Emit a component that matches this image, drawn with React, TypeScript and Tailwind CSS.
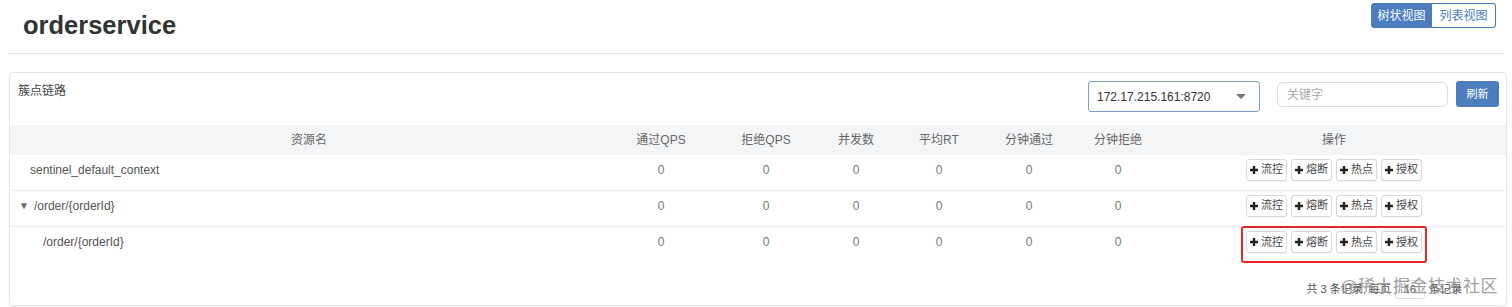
import React from "react";

const font = { fontFamily: '"Liberation Sans", Arial, "Noto Sans CJK SC", sans-serif' };

const cols = "grid grid-cols-[598px_106px_104px_76px_90px_90px_88px_1fr]";

const headers = ["通过QPS", "拒绝QPS", "并发数", "平均RT", "分钟通过", "分钟拒绝"];

function Plus() {
  return (
    <svg width="8" height="8" viewBox="0 0 8 8" className="mr-[3px]">
      <path d="M2.8 0h2.4v2.8H8v2.4H5.2V8H2.8V5.2H0V2.8h2.8z" fill="#222" />
    </svg>
  );
}

function Actions({ marked }: { marked?: boolean }) {
  const items = ["流控", "熔断", "热点", "授权"];
  return (
    <div className="relative flex justify-center gap-[4px]">
      {items.map((t) => (
        <button
          key={t}
          className="flex h-[22px] w-[41px] items-center justify-center rounded-[3px] border border-[#d9d9d9] bg-white text-[11px] text-[#444] shadow-[0_1px_1px_rgba(0,0,0,0.04)]"
        >
          <Plus />
          {t}
        </button>
      ))}
      {marked && (
        <div className="pointer-events-none absolute left-1/2 top-[-5px] h-[37px] w-[186px] -translate-x-1/2 rounded-[3px] border-2 border-[#e8262a]" />
      )}
    </div>
  );
}

function Row({ name, indent, caret, marked, last }: { name: string; indent: string; caret?: boolean; marked?: boolean; last?: boolean }) {
  return (
    <div className={`${cols} h-[36px] items-center pb-[6px] text-[12px] text-[#555] ${last ? "" : "border-b border-[#ececec]"}`}>
      <div className={`flex items-center ${indent}`}>
        {caret && <span className="mr-[5px] text-[10px] text-[#666]">▼</span>}
        {name}
      </div>
      {headers.map((h) => (
        <div key={h} className="text-center text-[#777]">0</div>
      ))}
      <Actions marked={marked} />
    </div>
  );
}

export default function App() {
  return (
    <div className="h-[307px] w-[1512px] overflow-hidden bg-white" style={font}>
      <div className="mx-[8px] flex h-[54px] items-start justify-between border-b border-[#e3e3e3]">
        <h1 className="pl-[15px] pt-[6px] text-[25.5px] font-bold text-[#333]">orderservice</h1>
        <div className="mr-[8px] mt-[3px] flex h-[25px] text-[12px]">
          <button className="w-[61px] rounded-l-[3px] border border-[#4a7cbc] bg-[#4b7dbf] text-white">树状视图</button>
          <button className="w-[64px] rounded-r-[3px] border border-[#4a7cbc] border-l-0 bg-white text-[#4b7dbf]">列表视图</button>
        </div>
      </div>

      <div className="ml-[9px] mr-[5px] mt-[18px] h-[234px] rounded-[4px] border border-[#e6e6e6] shadow-[0_1px_2px_rgba(0,0,0,0.05)]">
        <div className="flex h-[52px] items-start justify-between">
          <div className="pl-[8px] pt-[9px] text-[12px] text-[#444]">簇点链路</div>
          <div className="flex items-start pr-[7px] pt-[8px]">
            <div className="flex h-[31px] w-[172px] items-center justify-between rounded-[3px] border border-[#7b9ccc] px-[8px] text-[12px] text-[#333]">
              <span>172.17.215.161:8720</span>
              <span className="mr-[5px] h-0 w-0 border-x-[5px] border-t-[5px] border-x-transparent border-t-[#777]" />
            </div>
            <div className="ml-[17px] mt-[1px] flex h-[25px] w-[171px] items-center rounded-[6px] border border-[#dcdcdc] px-[9px] text-[12px] text-[#aaa]">
              关键字
            </div>
            <button className="ml-[8px] h-[26px] w-[43px] rounded-[3px] bg-[#4b7dbf] text-[11px] text-white">刷新</button>
          </div>
        </div>

        <div className={`${cols} h-[30px] items-center bg-[#f4f5f7] text-[12px] text-[#666]`}>
          <div className="text-center">资源名</div>
          {headers.map((h) => (
            <div key={h} className="text-center">{h}</div>
          ))}
          <div className="text-center">操作</div>
        </div>

        <Row name="sentinel_default_context" indent="pl-[20px]" />
        <Row name="/order/{orderId}" indent="pl-[9px]" caret />
        <Row name="/order/{orderId}" indent="pl-[33px]" marked last />

        <div className="relative mt-[17px] flex justify-end pr-[44px] text-[11px] text-[#555]">
          <span className="flex items-center">
            共 3 条记录, 每页
            <span className="mx-[4px] rounded-[3px] border border-[#ddd] px-[8px]">16</span>
            条记录
          </span>
          <span className="pointer-events-none absolute right-[8px] top-[-6px] text-[17px] tracking-[0.5px] text-[#8a8a8a] opacity-80">
            @稀土掘金技术社区
          </span>
        </div>
      </div>
    </div>
  );
}
